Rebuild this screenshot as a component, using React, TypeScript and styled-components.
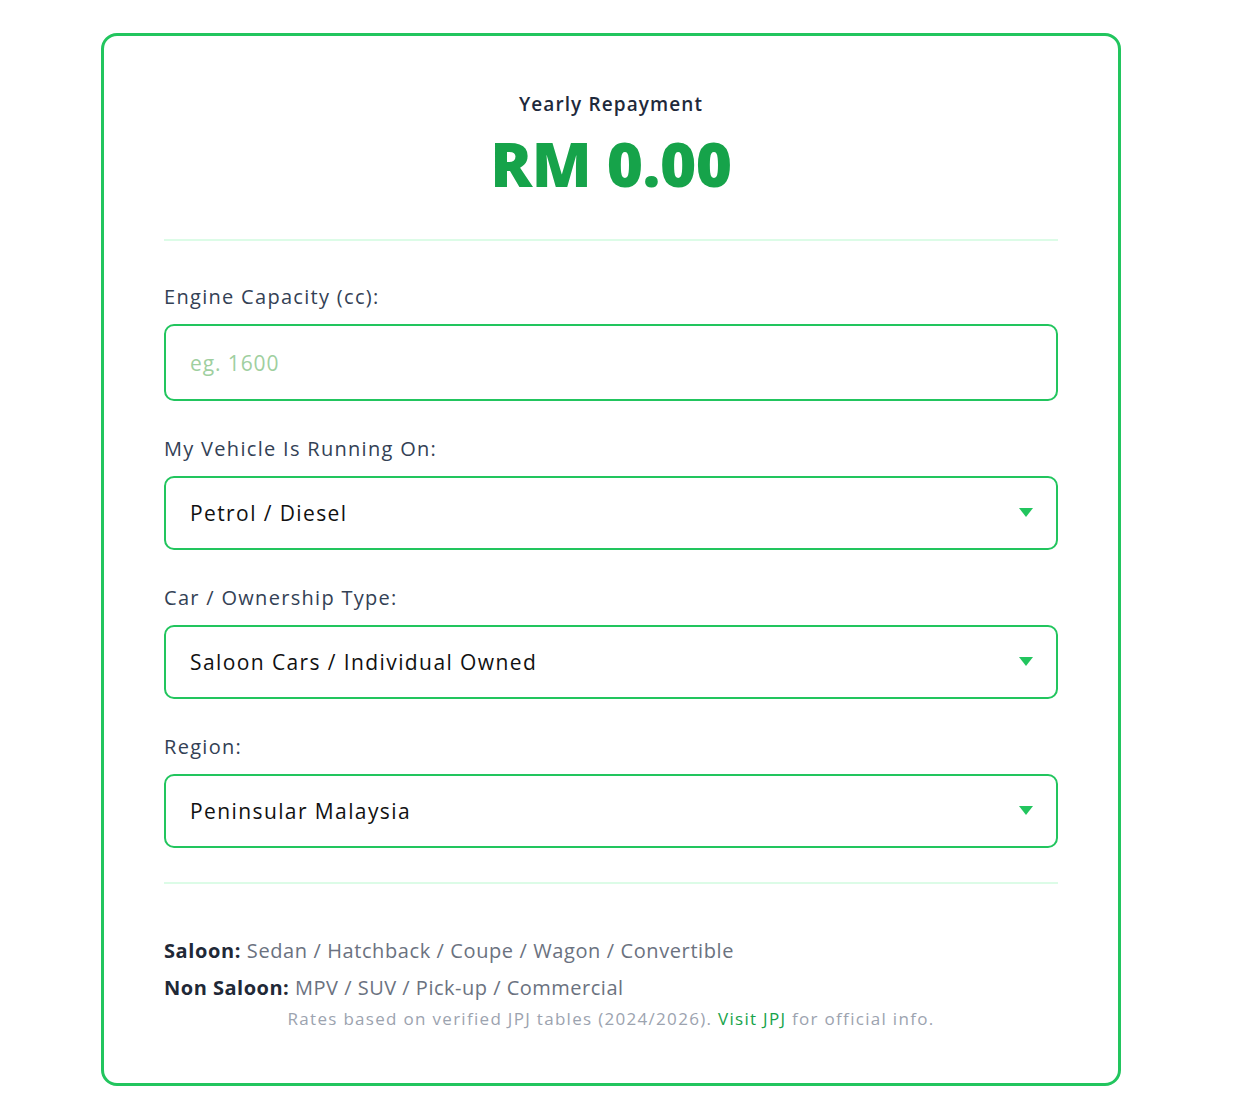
import React from "react";
import styled, { createGlobalStyle } from "styled-components";

const Global = createGlobalStyle`
  html, body { margin: 0; padding: 0; background: #ffffff; }
  body { font-family: "Open Sans", "Noto Sans", sans-serif; }
  * { box-sizing: border-box; }
`;

const Card = styled.div`
  width: 1020px;
  margin: 33px 0 0 101px;
  border: 3px solid #22c55e;
  border-radius: 16px;
  padding: 54px 60px 51px;
  display: flex;
  flex-direction: column;
`;

const Header = styled.div`
  display: flex;
  flex-direction: column;
  align-items: center;
  gap: 7px;
`;

const Title = styled.div`
  font-size: 19px;
  line-height: 28px;
  font-weight: 600;
  color: #1e293b;
  letter-spacing: 1.1px;
`;

const Amount = styled.div`
  font-size: 62px;
  line-height: 77px;
  font-weight: 800;
  color: #16a34a;
  letter-spacing: -0.5px;
`;

const Divider = styled.hr<{ $top: number; $bottom: number }>`
  border: none;
  height: 2px;
  background: #dcfce7;
  margin: ${(p) => p.$top}px 0 ${(p) => p.$bottom}px;
  width: 100%;
`;

const Fields = styled.div`
  display: flex;
  flex-direction: column;
  gap: 33px;
`;

const Field = styled.div`
  display: flex;
  flex-direction: column;
  gap: 12px;
`;

const Label = styled.label`
  font-size: 20px;
  line-height: 30px;
  color: #334155;
  letter-spacing: 1.3px;
`;

const TextInput = styled.input`
  height: 77px;
  width: 100%;
  border: 2px solid #22c55e;
  border-radius: 10px;
  padding: 0 24px;
  font-family: inherit;
  font-size: 21px;
  letter-spacing: 0.9px;
  color: #111827;
  outline: none;
  background: #fff;
  &::placeholder { color: #9fcf9f; }
`;

const SelectWrap = styled.div`
  position: relative;
  width: 100%;
`;

const Select = styled.select`
  appearance: none;
  -webkit-appearance: none;
  height: 74px;
  width: 100%;
  border: 2px solid #22c55e;
  border-radius: 10px;
  padding: 0 60px 0 24px;
  font-family: inherit;
  font-size: 21px;
  letter-spacing: 1.4px;
  color: #111111;
  background: #fff;
  outline: none;
`;

const Arrow = styled.svg`
  position: absolute;
  right: 25px;
  top: 50%;
  transform: translateY(-50%);
  pointer-events: none;
`;

const Notes = styled.div`
  display: flex;
  flex-direction: column;
`;

const NoteLine = styled.div<{ $spacing: number }>`
  font-size: 20px;
  line-height: 37px;
  color: #6b7280;
  letter-spacing: ${(p) => p.$spacing}px;
  strong { color: #1f2937; font-weight: 700; }
`;

const Footnote = styled.div`
  text-align: center;
  font-size: 17px;
  line-height: 26px;
  color: #9ca3af;
  letter-spacing: 1.3px;
  a { color: #16a34a; text-decoration: none; }
`;

function Dropdown({ value, options }: { value: string; options: string[] }) {
  return (
    <SelectWrap>
      <Select defaultValue={value}>
        {options.map((o) => (
          <option key={o} value={o}>{o}</option>
        ))}
      </Select>
      <Arrow width="14" height="10" viewBox="0 0 14 10">
        <polygon points="0,0 14,0 7,9" fill="#22c55e" />
      </Arrow>
    </SelectWrap>
  );
}

export default function App() {
  return (
    <>
      <Global />
      <Card>
        <Header>
          <Title>Yearly Repayment</Title>
          <Amount>RM 0.00</Amount>
        </Header>
        <Divider $top={37} $bottom={41} />
        <Fields>
          <Field>
            <Label>Engine Capacity (cc):</Label>
            <TextInput placeholder="eg. 1600" />
          </Field>
          <Field>
            <Label>My Vehicle Is Running On:</Label>
            <Dropdown value="Petrol / Diesel" options={["Petrol / Diesel", "Electric"]} />
          </Field>
          <Field>
            <Label>Car / Ownership Type:</Label>
            <Dropdown
              value="Saloon Cars / Individual Owned"
              options={["Saloon Cars / Individual Owned", "Non Saloon Cars / Individual Owned", "Saloon Cars / Company Owned", "Non Saloon Cars / Company Owned"]}
            />
          </Field>
          <Field>
            <Label>Region:</Label>
            <Dropdown value="Peninsular Malaysia" options={["Peninsular Malaysia", "Sabah / Sarawak / Labuan", "Langkawi / Tioman / Pangkor"]} />
          </Field>
        </Fields>
        <Divider $top={34} $bottom={48} />
        <Notes>
          <NoteLine $spacing={0.6}><strong>Saloon:</strong> Sedan / Hatchback / Coupe / Wagon / Convertible</NoteLine>
          <NoteLine $spacing={0.5}><strong>Non Saloon:</strong> MPV / SUV / Pick-up / Commercial</NoteLine>
          <Footnote>
            Rates based on verified JPJ tables (2024/2026). <a href="#">Visit JPJ</a> for official info.
          </Footnote>
        </Notes>
      </Card>
    </>
  );
}
